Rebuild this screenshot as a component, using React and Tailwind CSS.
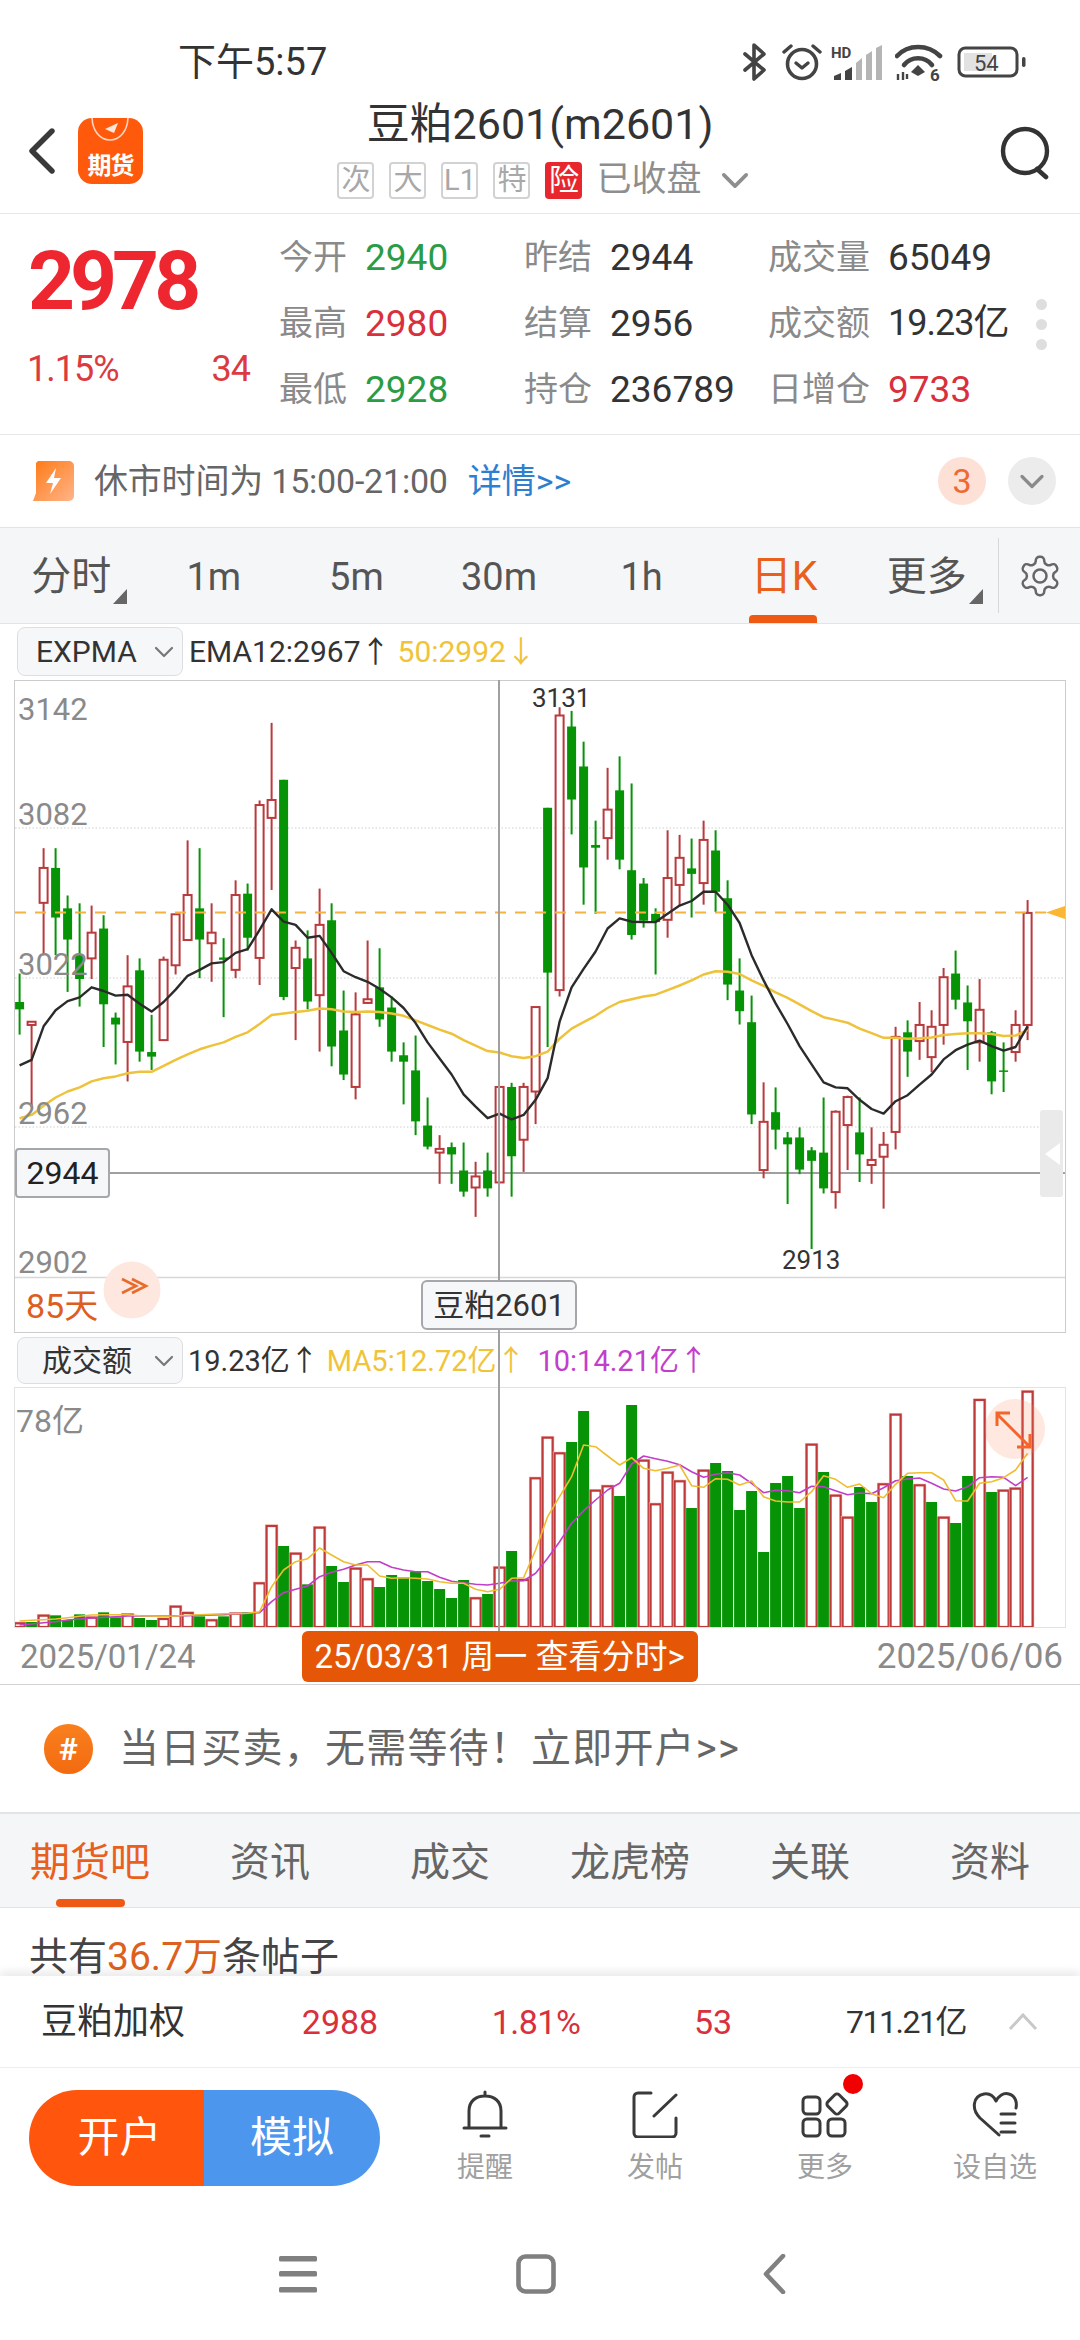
import React from "react";

const G = "#069406";
const R = "#b93a3c";

// candles: [up?, wickTop, wickBottom, bodyTop, bodyBottom] in crop units
const C = [
[0,770,903,832,848],[1,875,1060,875,882],[1,497,730,540,616],[0,497,730,540,648],[0,600,810,628,696],
[0,617,842,730,782],[1,622,782,681,737],[0,643,930,672,837],[0,855,968,866,881],[1,730,1005,798,919],
[0,737,962,763,940],[0,860,980,941,951],[1,733,915,740,915],[1,640,772,641,752],[1,480,698,599,697],
[0,497,780,628,696],[1,617,788,681,704],[0,693,865,735,740],[1,567,780,599,762],[0,574,720,596,692],
[1,393,795,403,736],[1,224,588,392,431],[0,348,828,348,821],[1,698,915,714,758],[0,676,848,737,831],
[1,585,940,664,817],[0,617,972,654,929],[0,807,1002,894,990],[1,811,1044,859,1017],[1,698,836,826,834],
[0,715,886,800,870],[0,820,962,844,940],[0,920,1055,948,962],[0,905,1122,981,1092],[0,1040,1153,1101,1147],
[1,1122,1228,1152,1160],[0,1138,1228,1148,1164],[0,1138,1256,1199,1245],[1,1180,1300,1212,1236],[0,1160,1256,1199,1238],
[1,1017,1225,1017,1225],[0,1008,1256,1017,1168],[1,1008,1202,1017,1132],[1,843,1098,843,1027],[0,409,930,409,768],
[1,190,820,208,806],[0,198,467,232,391],[0,265,620,319,539],[0,437,640,490,496],[1,322,522,413,475],
[0,297,543,371,522],[0,356,696,545,686],[0,562,670,574,655],[0,628,772,640,658],[1,458,692,562,653],
[1,468,622,518,577],[0,476,648,541,553],[1,437,620,479,573],[0,458,636,502,592],[0,567,828,606,794],
[0,737,881,807,852],[0,818,1098,876,1077],[1,1007,1216,1093,1198],[0,1018,1153,1072,1110],[0,1115,1272,1127,1142],
[0,1105,1207,1127,1197],[0,1148,1370,1155,1178],[0,1040,1249,1160,1238],[1,1068,1282,1071,1246],[1,1036,1198,1039,1100],
[0,1040,1224,1116,1164],[1,1105,1228,1176,1187],[1,1115,1282,1143,1169],[1,886,1153,908,1115],[0,872,995,898,940],
[1,832,958,882,917],[1,850,985,886,952],[1,758,925,778,882],[0,720,848,770,827],[0,796,980,833,874],
[1,782,962,849,920],[0,895,1033,898,1005],[0,920,1028,981,984],[1,850,962,882,941],[1,610,915,638,882],
];

const EMA12 = [970,958,885,850,830,822,800,808,818,816,836,853,832,805,775,762,748,745,725,717,675,630,657,664,692,688,725,765,778,788,803,822,845,878,920,955,990,1033,1060,1085,1075,1088,1078,1045,998,875,800,760,722,672,650,657,658,658,640,622,612,592,592,620,660,730,785,835,880,928,968,1007,1018,1020,1045,1065,1075,1048,1035,1012,990,957,937,925,916,928,938,930,885];
const EMA50 = [1085,1078,1058,1040,1027,1018,1005,998,994,987,984,984,971,958,946,935,927,920,908,898,880,860,857,854,851,846,848,853,854,853,854,857,862,872,882,892,901,915,927,939,942,950,954,950,940,912,890,876,862,845,832,826,820,816,806,796,785,772,765,766,771,785,797,811,823,837,852,865,871,877,890,900,910,910,912,911,909,904,902,900,900,902,906,905,893];

const V = [
[1,910],[0,906],[1,887],[0,886],[0,900],[0,883],[1,893],[0,877],[0,892],[1,884],[0,894],[0,900],[1,897],[1,860],[1,879],[0,889],[1,901],[0,889],[1,881],[0,877],
[1,790],[1,618],[0,678],[1,701],[0,793],[1,623],[0,738],[0,786],[1,746],[1,778],[0,801],[0,765],[0,772],[0,755],[0,783],[0,807],[0,834],[0,780],[1,835],[0,822],
[1,743],[0,693],[1,780],[1,475],[1,353],[1,400],[0,366],[0,273],[1,512],[1,499],[0,528],[0,255],[1,422],[1,553],[1,458],[1,484],[0,564],[1,452],[0,429],[0,453],
[0,570],[0,513],[0,696],[0,489],[0,468],[0,564],[1,374],[0,456],[1,527],[1,593],[0,501],[0,546],[1,493],[1,284],[0,468],[1,496],[0,546],[1,593],[0,609],[0,468],
[1,240],[0,516],[1,512],[1,506],[1,215],
];
const MA5 = [903,901,899,897,893,889,885,884,884,884,887,888,889,888,886,884,883,881,881,880,875,800,750,725,716,684,705,725,735,735,768,775,773,775,777,785,790,790,808,815,808,775,773,690,590,530,470,375,380,408,435,413,445,452,445,435,497,502,476,478,495,483,530,543,546,546,515,467,478,502,492,521,533,493,460,458,458,480,542,543,490,485,473,450,400];
const MA10 = [915,912,908,905,900,897,894,892,890,888,888,888,888,888,887,886,885,884,882,880,878,845,818,808,798,770,757,748,735,725,725,742,750,755,755,772,784,788,793,795,790,783,782,760,715,665,610,572,540,510,490,432,408,416,424,434,455,472,463,458,465,490,518,511,512,518,499,500,512,524,519,521,503,482,477,474,490,507,513,500,473,470,472,497,472];

const cx = (i) => 19.6 + 12 * i;
const ky = (z) => 620 + z / 2.178;
const vy = (z) => 1320 + z / 3;
const pts = (arr, f) => arr.map((z, i) => `${cx(i).toFixed(1)},${f(z).toFixed(1)}`).join(" ");

function KChart() {
  return (
    <svg width="1050" height="651" viewBox="15 681 1050 651" className="block">
      {[828, 978, 1127].map((y) => (
        <line key={y} x1="15" x2="1065" y1={y} y2={y} stroke="#cfcfcf" strokeWidth="1" strokeDasharray="1.5 2" />
      ))}
      <line x1="15" x2="1065" y1="1277.5" y2="1277.5" stroke="#d8d8d8" strokeWidth="1.5" />
      <line x1="15" x2="1065" y1="1173" y2="1173" stroke="#a0a0a0" strokeWidth="2" />
      {C.map(([up, wt, wb, bt, bb], i) => {
        const x = cx(i);
        const col = up ? R : G;
        const t = ky(bt);
        const b = ky(bb);
        return (
          <g key={i}>
            <line x1={x} x2={x} y1={ky(wt)} y2={ky(wb)} stroke={col} strokeWidth="2" />
            {up ? (
              <rect x={x - 4} y={t} width="8" height={Math.max(b - t, 1)} fill="#fff" stroke={col} strokeWidth="2" />
            ) : (
              <rect x={x - 4.5} y={t} width="9" height={Math.max(b - t, 1.5)} fill={col} />
            )}
          </g>
        );
      })}
      <line x1="15" x2="1046" y1="912.5" y2="912.5" stroke="#f6b23f" strokeWidth="2" strokeDasharray="11 9" />
      <polygon points="1046,912.5 1065,906 1065,919" fill="#fbb632" />
      <polyline points={pts(EMA50, ky)} fill="none" stroke="#eec23b" strokeWidth="2.5" strokeLinejoin="round" />
      <polyline points={pts(EMA12, ky)} fill="none" stroke="#2b2b2b" strokeWidth="2.4" strokeLinejoin="round" />
      <circle cx="132" cy="1290" r="28.5" fill="#fde7df" />
      <path d="M122 1279 L136 1286 L122 1293 M132 1279 L146 1286 L132 1293" fill="none" stroke="#ea6a2a" strokeWidth="2.6" />
    </svg>
  );
}

function VolChart() {
  return (
    <svg width="1050" height="239" viewBox="15 1388 1050 239" className="block">
      {V.map(([up, z], i) => {
        const x = cx(i);
        const t = vy(z);
        return up ? (
          <g key={i}>
            <rect x={x - 5} y={t} width="10" height={1627 - t} fill="#fff" stroke="#f8c4c0" strokeWidth="3.4" />
            <rect x={x - 5} y={t} width="10" height={1627 - t} fill="#fff" stroke="#bd3a3a" strokeWidth="2.2" />
          </g>
        ) : (
          <rect key={i} x={x - 5.5} y={t} width="11" height={1627 - t} fill={G} />
        );
      })}
      <polyline points={pts(MA10, vy)} fill="none" stroke="#c13ec8" strokeWidth="1.6" strokeLinejoin="round" />
      <polyline points={pts(MA5, vy)} fill="none" stroke="#eebd30" strokeWidth="1.6" strokeLinejoin="round" />
      <circle cx="1015" cy="1429" r="30" fill="#ff8a60" fillOpacity="0.2" />
      <path d="M997 1414 L1030 1447 M997 1426 L997 1413 L1010 1413 M1030 1434 L1030 1447 L1017 1447" fill="none" stroke="#f5642a" strokeWidth="3" />
    </svg>
  );
}

function Chevron({ className = "", color = "#888", w = 2 }) {
  return (
    <svg viewBox="0 0 20 12" className={className} fill="none">
      <path d="M2 2 L10 10 L18 2" stroke={color} strokeWidth={w} strokeLinecap="round" strokeLinejoin="round" />
    </svg>
  );
}

function Corner() {
  return (
    <svg width="14" height="15" viewBox="0 0 14 15" className="absolute left-[100%] top-[32px] ml-[2px]">
      <polygon points="14,0 14,15 0,15" fill="#666" />
    </svg>
  );
}

function StatusIcons() {
  return (
    <div className="absolute left-[743px] top-[43px] flex items-center h-[38px]">
      <svg width="24" height="38" viewBox="0 0 24 38" fill="none">
        <path d="M2 11 L21 27 L11 36 L11 2 L21 11 L2 27" stroke="#444" strokeWidth="3.6" strokeLinejoin="round" strokeLinecap="round" />
      </svg>
      <svg width="40" height="38" viewBox="0 0 40 38" fill="none" className="ml-[15px]">
        <circle cx="20" cy="21" r="14.5" stroke="#444" strokeWidth="3.6" />
        <path d="M14 20 L20 25 L26 20" stroke="#444" strokeWidth="3.4" strokeLinecap="round" strokeLinejoin="round" />
        <path d="M2 9 L9 3 M31 3 L38 9" stroke="#444" strokeWidth="3.4" strokeLinecap="round" />
      </svg>
      <svg width="54" height="38" viewBox="0 0 54 38" className="ml-[9px]">
        <text x="0" y="15" fontSize="15" fontWeight="700" fontFamily="Roboto" fill="#444">HD</text>
        <path d="M3 37 L3 33 L10 30 L10 37 Z" fill="#444" />
        <path d="M14 37 L14 28 L21 24 L21 37 Z" fill="#444" />
        <path d="M25 37 L25 20 L31 15 L31 37 Z" fill="#b5b5b5" />
        <path d="M35 37 L35 12 L41 8 L41 37 Z" fill="#b5b5b5" />
        <path d="M45 37 L45 5 L51 2 L51 37 Z" fill="#b5b5b5" />
      </svg>
      <svg width="48" height="38" viewBox="0 0 48 38" fill="none" className="ml-[10px]">
        <path d="M2 13 C13 1 33 1 45 13" stroke="#444" strokeWidth="4.6" strokeLinecap="round" />
        <path d="M9 22 C16 13 30 13 37 22" stroke="#444" strokeWidth="4.6" strokeLinecap="round" />
        <path d="M16 29 L23 22 L30 29 L23 33 Z" fill="#444" />
        <path d="M3 31 L3 37 M8 29 L8 37 M12 31 L12 36 " stroke="#444" strokeWidth="2.4" />
        <text x="35" y="38" fontSize="17" fontWeight="700" fontFamily="Roboto" fill="#444">6</text>
      </svg>
      <svg width="70" height="32" viewBox="0 0 70 32" fill="none" className="ml-[14px]">
        <rect x="7" y="7" width="28" height="18" fill="#e2e2e2" />
        <rect x="2" y="2" width="58" height="28" rx="6.5" stroke="#444" strokeWidth="3" />
        <text x="17" y="25" fontSize="22" fontFamily="Roboto" fill="#444">54</text>
        <rect x="65" y="11" width="3.5" height="10" rx="1.7" fill="#444" />
      </svg>
    </div>
  );
}

function Tag({ children, red }) {
  return red ? (
    <span className="w-[37px] h-[37px] rounded-[4px] bg-[#e7272d] text-white text-[30px] leading-[36px] flex items-center justify-center">{children}</span>
  ) : (
    <span className="w-[37px] h-[37px] rounded-[4px] border-2 border-[#d2d2d2] text-[#a8a8a8] text-[29px] leading-[33px] flex items-center justify-center">{children}</span>
  );
}

function Stat({ l, v, c }) {
  return (
    <div className="flex items-center h-[66px]">
      <span className="text-[34px] text-[#8a8a8a] leading-none">{l}</span>
      <span className={`ml-[18px] text-[37px] leading-none ${c}`}>{v}</span>
    </div>
  );
}

const green = "text-[#2a9c46]";
const red = "text-[#d8303c]";
const dark = "text-[#333333]";

function Select({ children, boxClass, textClass }) {
  return (
    <div className={`${boxClass} w-[166px] border border-[#dcdee2] bg-[#f6f7f9] rounded-[8px] relative flex items-center`}>
      <span className={textClass}>{children}</span>
      <Chevron className="absolute left-[136px] top-[50%] -translate-y-[50%] w-[20px] h-[12px]" color="#777" w={2.2} />
    </div>
  );
}

export default function App() {
  return (
    <div
      className="relative w-[1080px] h-[2340px] overflow-hidden bg-white text-[#333]"
      style={{ fontFamily: 'Roboto, "Noto Sans CJK SC", sans-serif' }}
    >
      {/* status */}
      <div className="relative h-[92px]">
        <div className="absolute left-[178px] top-[40px] text-[38px] leading-[44px] text-[#333]">下午5:57</div>
        <StatusIcons />
      </div>

      {/* header */}
      <div className="grid grid-cols-[1fr_auto_1fr] h-[122px] border-b border-[#e9e9e9]">
        <div className="flex items-center pl-[29px] pb-[3px]">
          <svg width="26" height="46" viewBox="0 0 26 46" fill="none">
            <path d="M23 3 L3 23 L23 43" stroke="#3a3a3a" strokeWidth="5.4" strokeLinecap="round" strokeLinejoin="round" />
          </svg>
          <div className="relative ml-[23px] w-[65px] h-[66px] rounded-[14px] bg-[#ff5a0c] overflow-hidden flex items-end justify-center">
            <svg width="65" height="32" viewBox="0 0 65 32" className="absolute left-0 top-0" fill="none">
              <path d="M14 -2 C14 30 50 30 50 -2" stroke="#ffd5c2" strokeWidth="1.6" />
              <path d="M27 11 L40 5 L36 15 Z" fill="#ffe7dc" />
            </svg>
            <span className="text-white font-bold text-[24px] leading-[36px] tracking-[-1px]">期货</span>
          </div>
        </div>
        <div className="flex flex-col items-center pt-[7px]">
          <div className="text-[43px] leading-[50px] text-[#333] whitespace-nowrap">豆粕2601(m2601)</div>
          <div className="flex items-center mt-[12px] gap-[15px] pl-[6px]">
            <Tag>次</Tag>
            <Tag>大</Tag>
            <Tag>L1</Tag>
            <Tag>特</Tag>
            <Tag red>险</Tag>
            <span className="text-[35px] leading-[38px] text-[#8e8e8e] -ml-[1px]">已收盘</span>
            <Chevron className="w-[28px] h-[17px] ml-[4px]" color="#8e8e8e" w={2.6} />
          </div>
        </div>
        <div className="flex items-center justify-end pr-[27px]">
          <svg width="54" height="54" viewBox="0 0 54 54" fill="none">
            <circle cx="26" cy="25" r="22" stroke="#333" strokeWidth="4.4" />
            <path d="M38 43 L47 51" stroke="#333" strokeWidth="4.6" strokeLinecap="round" />
          </svg>
        </div>
      </div>

      {/* price + stats */}
      <div className="flex h-[221px] border-b border-[#e9e9e9]">
        <div className="w-[279px] pl-[27px] flex flex-col">
          <div className="mt-[26px] ml-[1px] text-[82px] leading-[82px] font-bold tracking-[-5px] text-[#ee2630]">2978</div>
          <div className="mt-[27px] w-[223px] flex justify-between text-[36px] leading-[40px] text-[#dc3a42] tracking-[-1px]">
            <span>1.15%</span>
            <span>34</span>
          </div>
        </div>
        <div className="w-[757px] pt-[10px] grid grid-cols-[245px_244px_268px] auto-rows-[66px]">
          <Stat l="今开" v="2940" c={green} />
          <Stat l="昨结" v="2944" c={dark} />
          <Stat l="成交量" v="65049" c={dark} />
          <Stat l="最高" v="2980" c={red} />
          <Stat l="结算" v="2956" c={dark} />
          <div className="flex items-center h-[66px]">
            <span className="text-[34px] text-[#8a8a8a] leading-none">成交额</span>
            <span className="ml-[18px] text-[36px] leading-none tracking-[-1px] text-[#333333]">19.23亿</span>
          </div>
          <Stat l="最低" v="2928" c={green} />
          <Stat l="持仓" v="236789" c={dark} />
          <Stat l="日增仓" v="9733" c={red} />
        </div>
        <div className="flex flex-col gap-[9px] justify-center">
          <span className="block w-[11px] h-[11px] rounded-full bg-[#dedede]" />
          <span className="block w-[11px] h-[11px] rounded-full bg-[#dedede]" />
          <span className="block w-[11px] h-[11px] rounded-full bg-[#dedede]" />
        </div>
      </div>

      {/* notice */}
      <div className="flex items-center h-[92px] pl-[33px] pr-[24px]">
        <svg width="41" height="40" viewBox="0 0 41 40">
          <defs>
            <linearGradient id="bolt" x1="0" y1="0" x2="1" y2="1">
              <stop offset="0" stopColor="#ff7a14" />
              <stop offset="1" stopColor="#ffb48a" />
            </linearGradient>
          </defs>
          <path d="M5 0 H36 A5 5 0 0 1 41 5 V35 A5 5 0 0 1 36 40 H0 L3 32 V2 Z" fill="url(#bolt)" />
          <path d="M23 7 L13 22 L20 22 L17 33 L28 17 L21 17 Z" fill="#fff" />
        </svg>
        <span className="ml-[20px] text-[34px] leading-[40px] text-[#666] tracking-[-0.2px]">休市时间为 15:00-21:00</span>
        <span className="ml-[20px] text-[34px] leading-[40px] text-[#2f7fd0]">详情&gt;&gt;</span>
        <span className="ml-auto w-[48px] h-[48px] rounded-full bg-[#fde0d6] text-[#ef6a33] text-[34px] leading-none flex items-center justify-center">3</span>
        <span className="ml-[22px] w-[48px] h-[48px] rounded-full bg-[#ececec] flex items-center justify-center">
          <Chevron className="w-[26px] h-[15px]" color="#8a8a8a" w={2.6} />
        </span>
      </div>

      {/* period tabs */}
      <div className="flex h-[97px] bg-[#f5f6f8] border-t border-b border-[#e2e4e8]">
        <div className="w-[998px] grid grid-cols-7 text-[38px] text-[#555] leading-none">
          {["分时", "1m", "5m", "30m", "1h", "日K", "更多"].map((t, i) => (
            <div key={t} className="relative flex items-center justify-center pt-[2px]">
              <span className={`relative ${i === 5 ? "text-[#e8601c] text-[41px]" : ""} ${i === 0 || i === 6 ? "text-[40px]" : ""}`}>
                {t}
                {(i === 0 || i === 6) && <Corner />}
              </span>
              {i === 5 && <span className="absolute left-[36px] bottom-0 w-[68px] h-[8px] rounded-t-[4px] bg-[#ee5a14]" />}
            </div>
          ))}
        </div>
        <div className="relative flex-1 flex items-center border-l border-[#d6d8dc] my-[10px] pl-[18px]">
          <svg width="46" height="46" viewBox="0 0 24 24" fill="none" stroke="#666" strokeWidth="1.3" strokeLinecap="round" strokeLinejoin="round">
            <path d="M12.22 2h-.44a2 2 0 0 0-2 2v.18a2 2 0 0 1-1 1.73l-.43.25a2 2 0 0 1-2 0l-.15-.08a2 2 0 0 0-2.73.73l-.22.38a2 2 0 0 0 .73 2.73l.15.1a2 2 0 0 1 1 1.72v.51a2 2 0 0 1-1 1.74l-.15.09a2 2 0 0 0-.73 2.73l.22.38a2 2 0 0 0 2.73.73l.15-.08a2 2 0 0 1 2 0l.43.25a2 2 0 0 1 1 1.73V20a2 2 0 0 0 2 2h.44a2 2 0 0 0 2-2v-.18a2 2 0 0 1 1-1.73l.43-.25a2 2 0 0 1 2 0l.15.08a2 2 0 0 0 2.73-.73l.22-.39a2 2 0 0 0-.73-2.73l-.15-.08a2 2 0 0 1-1-1.74v-.5a2 2 0 0 1 1-1.74l.15-.09a2 2 0 0 0 .73-2.73l-.22-.38a2 2 0 0 0-2.73-.73l-.15.08a2 2 0 0 1-2 0l-.43-.25a2 2 0 0 1-1-1.73V4a2 2 0 0 0-2-2z" />
            <circle cx="12" cy="12" r="3.4" />
          </svg>
        </div>
      </div>

      {/* chart area */}
      <div className="relative">
        <div className="absolute left-[498px] top-[56px] w-[2px] h-[951px] bg-[#a0a0a0] z-10" />

        <div className="flex items-start h-[56px] pl-[17px] pt-[3px]">
          <Select boxClass="h-[49px]" textClass="ml-[18px] text-[30px] leading-none text-[#333]">EXPMA</Select>
          <span className="ml-[6px] mt-[7px] text-[30px] leading-[36px] text-[#333] whitespace-nowrap">EMA12:2967↑</span>
          <span className="ml-[7px] mt-[7px] text-[30px] leading-[36px] text-[#efc438] whitespace-nowrap">50:2992↓</span>
        </div>

        <div className="relative ml-[14px] w-[1052px] h-[653px] border border-[#cccccc] bg-white">
          <KChart />
          <span className="absolute left-[3px] top-[13px] text-[31px] leading-none text-[#8a8a8a]">3142</span>
          <span className="absolute left-[3px] top-[118px] text-[31px] leading-none text-[#8a8a8a]">3082</span>
          <span className="absolute left-[3px] top-[268px] text-[31px] leading-none text-[#8a8a8a]">3022</span>
          <span className="absolute left-[3px] top-[417px] text-[31px] leading-none text-[#8a8a8a]">2962</span>
          <span className="absolute left-[3px] top-[566px] text-[31px] leading-none text-[#8a8a8a]">2902</span>
          <span className="absolute left-[517px] top-[4px] text-[26px] leading-none text-[#333]">3131</span>
          <span className="absolute left-[767px] top-[566px] text-[26px] leading-none text-[#333]">2913</span>
          <span className="absolute left-0 top-[467px] w-[95px] h-[50px] rounded-[4px] border-2 border-[#a5a7aa] bg-[#f6f7f9] text-[32px] text-[#222] flex items-center justify-center leading-none">2944</span>
          <span className="absolute left-[11px] top-[607px] text-[34px] leading-[36px] text-[#dd5e22]">85天</span>
          <span className="absolute left-[406px] top-[599px] z-20 w-[156px] h-[50px] rounded-[6px] border-2 border-[#a5a7aa] bg-[#f6f7f9] text-[31px] text-[#333] flex items-center justify-center leading-none whitespace-nowrap">豆粕2601</span>
          <span className="absolute left-[1025px] top-[429px] w-[23px] h-[87px] rounded-[3px] bg-[#eaeaea] flex items-center justify-center">
            <svg width="16" height="24" viewBox="0 0 16 24"><polygon points="1,12 16,1 16,23" fill="#fff" /></svg>
          </span>
        </div>

        <div className="flex items-start h-[54px] pl-[17px] pt-[4px]">
          <Select boxClass="h-[47px]" textClass="ml-[24px] text-[30px] leading-none text-[#333]">成交额</Select>
          <span className="ml-[5px] mt-[6px] text-[29px] leading-[36px] text-[#333] whitespace-nowrap">19.23亿↑</span>
          <span className="ml-[8px] mt-[6px] text-[29px] leading-[36px] text-[#efc438] whitespace-nowrap">MA5:12.72亿↑</span>
          <span className="ml-[12px] mt-[6px] text-[29px] leading-[36px] text-[#c23fcb] whitespace-nowrap">10:14.21亿↑</span>
        </div>

        <div className="relative ml-[14px] w-[1052px] h-[241px] border border-[#e2e2e2] bg-white">
          <VolChart />
          <span className="absolute left-[1px] top-[15px] text-[32px] leading-[36px] text-[#8a8a8a]">78亿</span>
        </div>

        <div className="flex items-center h-[57px] pl-[20px] pr-[17px] border-b border-[#d2d2d2]">
          <span className="text-[33px] leading-none text-[#8a8a8a]">2025/01/24</span>
          <span className="relative z-20 ml-[106px] w-[396px] h-[51px] rounded-[6px] bg-[#e55706] text-white text-[33px] leading-none flex items-center justify-center whitespace-nowrap">25/03/31 周一 查看分时&gt;</span>
          <span className="ml-auto text-[35px] leading-none text-[#8a8a8a]">2025/06/06</span>
        </div>
      </div>

      {/* ad */}
      <div className="flex items-center h-[127px] pl-[44px]">
        <span className="w-[49px] h-[50px] rounded-full bg-gradient-to-b from-[#f9801d] to-[#f36a10] text-white font-bold text-[32px] leading-none flex items-center justify-center">#</span>
        <span className="ml-[26px] text-[40px] leading-[44px] tracking-[1.2px] text-[#666]">当日买卖，无需等待！立即开户&gt;&gt;</span>
      </div>

      {/* tabs */}
      <div className="grid grid-cols-6 h-[96px] bg-[#f5f6f8] border-t-2 border-b border-[#e2e4e8] text-[40px] leading-none text-[#666]">
        {["期货吧", "资讯", "成交", "龙虎榜", "关联", "资料"].map((t, i) => (
          <div key={t} className={`relative flex items-center justify-center pt-[5px] ${i === 0 ? "text-[#e8601c]" : ""}`}>
            {t}
            {i === 0 && <span className="absolute left-[56px] bottom-[0px] w-[69px] h-[8px] rounded-[4px] bg-[#ee5a14]" />}
          </div>
        ))}
      </div>

      {/* posts */}
      <div className="h-[68px] overflow-hidden pl-[29px] pt-[26px] text-[39px] leading-[46px] text-[#444] whitespace-nowrap">
        共有<span className="text-[#dc6120]">36.7万</span>条帖子
      </div>

      {/* index bar */}
      <div className="relative z-10 flex items-center h-[92px] pl-[41px] bg-white border-b border-[#eeeeee] shadow-[0_-5px_8px_rgba(0,0,0,0.08)]">
        <span className="w-[229px] text-[36px] leading-none text-[#333]">豆粕加权</span>
        <span className="w-[140px] text-center text-[34px] leading-none text-[#d8303c]">2988</span>
        <span className="ml-[56px] w-[140px] text-center text-[34px] leading-none text-[#d8303c] tracking-[-0.5px]">1.81%</span>
        <span className="ml-[37px] w-[140px] text-center text-[34px] leading-none text-[#d8303c]">53</span>
        <span className="ml-[53px] w-[140px] text-center text-[32px] leading-none text-[#333] tracking-[-1.5px] whitespace-nowrap">711.21亿</span>
        <svg width="30" height="18" viewBox="0 0 30 18" fill="none" className="ml-[32px]">
          <path d="M2 16 L15 2 L28 16" stroke="#c8c8c8" strokeWidth="3" />
        </svg>
      </div>

      {/* actions */}
      <div className="flex items-start h-[122px] pl-[29px] pt-[22px]">
        <div className="flex w-[351px] h-[96px] rounded-full overflow-hidden text-white text-[42px] leading-none">
          <span className="w-[175px] bg-[#ff550d] flex items-center justify-center pl-[6px]">开户</span>
          <span className="flex-1 bg-[#4c96ee] flex items-center justify-center">模拟</span>
        </div>
        <div className="grid grid-cols-4 w-[680px] ml-[20px] text-[28px] leading-none text-[#a0a0a0]">
          <div className="flex flex-col items-center">
            <svg width="46" height="48" viewBox="0 0 46 48" fill="none" stroke="#3a3a3a" strokeWidth="3" strokeLinecap="round">
              <path d="M2 38 H44 M7 38 V21 C7 11 14 6 23 6 C32 6 39 11 39 21 V38 M23 5 V2 M19 46 H27" />
            </svg>
            <span className="mt-[16px]">提醒</span>
          </div>
          <div className="flex flex-col items-center">
            <svg width="46" height="48" viewBox="0 0 46 48" fill="none" stroke="#3a3a3a" strokeWidth="3" strokeLinecap="round">
              <path d="M19 3 H6 A4 4 0 0 0 2 7 V43 A4 4 0 0 0 6 47 H40 A4 4 0 0 0 44 43 V28 M44 5 L22 26" />
            </svg>
            <span className="mt-[16px]">发帖</span>
          </div>
          <div className="relative flex flex-col items-center">
            <svg width="48" height="48" viewBox="0 0 48 48" fill="none" stroke="#3a3a3a" strokeWidth="3">
              <rect x="2" y="7" width="17" height="17" rx="4" />
              <rect x="2" y="29" width="17" height="17" rx="4" />
              <rect x="27" y="29" width="17" height="17" rx="4" />
              <rect x="28" y="6" width="16" height="16" rx="3" transform="rotate(45 36 14)" />
            </svg>
            <span className="mt-[16px]">更多</span>
            <span className="absolute left-[103px] -top-[16px] w-[20px] h-[20px] rounded-full bg-[#f00000]" />
          </div>
          <div className="flex flex-col items-center">
            <svg width="46" height="48" viewBox="0 0 46 48" fill="none" stroke="#3a3a3a" strokeWidth="3" strokeLinecap="round" strokeLinejoin="round">
              <path d="M27 45 L8 28 C-1 19 1 6 12 4 C18 3 22 7 24 11 C26 7 31 2 37 4 C44 6 45 13 44 18 M29 24 H43 M29 33 H43 M29 42 H43" />
            </svg>
            <span className="mt-[16px]">设自选</span>
          </div>
        </div>
      </div>

      {/* nav */}
      <div className="grid grid-cols-3 w-[714px] ml-[179px] mt-[62px] h-[44px] items-center justify-items-center">
        <svg width="38" height="40" viewBox="0 0 38 40" fill="#808080">
          <rect x="0" y="2" width="38" height="5.5" rx="1.5" />
          <rect x="0" y="17" width="38" height="5.5" rx="1.5" />
          <rect x="0" y="33" width="38" height="5.5" rx="1.5" />
        </svg>
        <svg width="40" height="40" viewBox="0 0 40 40" fill="none">
          <rect x="2.5" y="2.5" width="35" height="35" rx="7" stroke="#808080" strokeWidth="4.6" />
        </svg>
        <svg width="26" height="40" viewBox="0 0 26 40" fill="none">
          <path d="M22 2 L5 20 L22 38" stroke="#808080" strokeWidth="4.6" strokeLinecap="round" strokeLinejoin="round" />
        </svg>
      </div>
    </div>
  );
}
